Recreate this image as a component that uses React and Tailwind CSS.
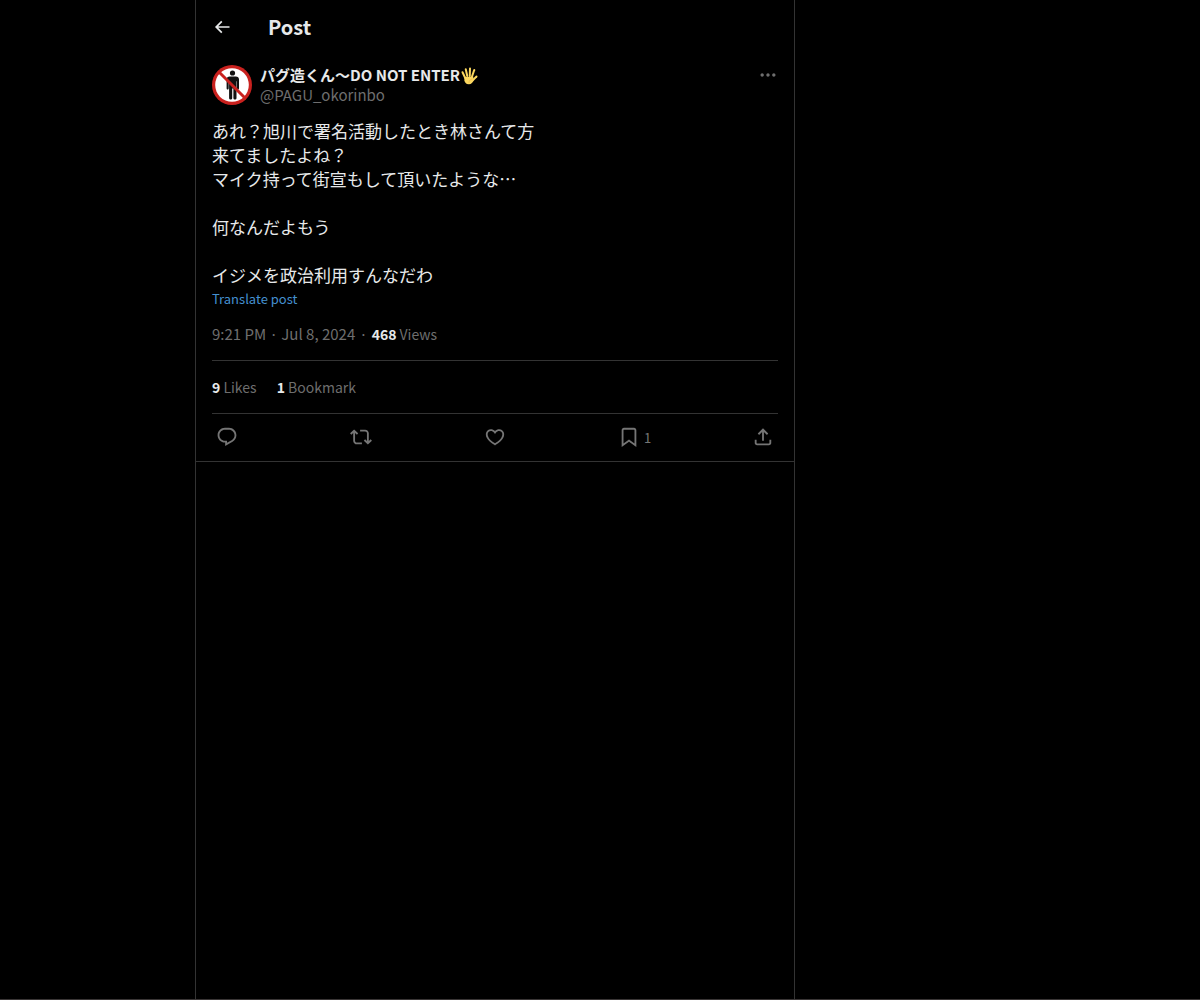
const PATHS = {
  back: "M7.414 13l5.043 5.04-1.414 1.42L3.586 12l7.457-7.46 1.414 1.42L7.414 11H21v2H7.414z",
  more: "M3 12c0-1.1.9-2 2-2s2 .9 2 2-.9 2-2 2-2-.9-2-2zm9 2c1.1 0 2-.9 2-2s-.9-2-2-2-2 .9-2 2 .9 2 2 2zm7 0c1.1 0 2-.9 2-2s-.9-2-2-2-2 .9-2 2 .9 2 2 2z",
  reply: "M1.751 10c0-4.42 3.584-8 8.005-8h4.366c4.49 0 8.129 3.64 8.129 8.13 0 2.96-1.607 5.68-4.196 7.11l-8.054 4.46v-3.69h-.067c-4.49.1-8.183-3.51-8.183-8.01zm8.005-6c-3.317 0-6.005 2.69-6.005 6 0 3.37 2.77 6.08 6.138 6.01l.351-.01h1.761v2.3l5.087-2.81c1.951-1.08 3.163-3.13 3.163-5.36 0-3.39-2.744-6.13-6.129-6.13H9.756z",
  repost: "M4.5 3.88l4.432 4.14-1.364 1.46L5.5 7.55V16c0 1.1.896 2 2 2H13v2H7.5c-2.209 0-4-1.79-4-4V7.55L1.432 9.48.068 8.02 4.5 3.88zM16.5 6H11V4h5.5c2.209 0 4 1.79 4 4v8.45l2.068-1.93 1.364 1.46-4.432 4.14-4.432-4.14 1.364-1.46 2.068 1.93V8c0-1.1-.896-2-2-2z",
  like: "M16.697 5.5c-1.222-.06-2.679.51-3.89 2.16l-.805 1.09-.806-1.09C9.984 6.01 8.526 5.44 7.304 5.5c-1.243.07-2.349.78-2.91 1.91-.552 1.12-.633 2.78.479 4.82 1.074 1.97 3.257 4.27 7.129 6.61 3.87-2.34 6.052-4.64 7.126-6.61 1.111-2.04 1.03-3.7.477-4.82-.561-1.13-1.666-1.84-2.908-1.91zm4.187 7.69c-1.351 2.48-4.001 5.12-8.379 7.67l-.503.3-.504-.3c-4.379-2.55-7.029-5.19-8.382-7.67-1.36-2.5-1.41-4.86-.514-6.67.887-1.79 2.647-2.91 4.601-3.01 1.651-.09 3.368.56 4.798 2.01 1.429-1.45 3.146-2.1 4.796-2.01 1.954.1 3.714 1.22 4.601 3.01.896 1.81.846 4.17-.514 6.67z",
  bookmark: "M4 4.5C4 3.12 5.119 2 6.5 2h11C18.881 2 20 3.12 20 4.5v18.44l-8-5.71-8 5.71V4.5zM6.5 4c-.276 0-.5.22-.5.5v14.56l6-4.29 6 4.29V4.5c0-.28-.224-.5-.5-.5h-11z",
  share: "M12 2.59l5.7 5.7-1.41 1.42L13 6.41V16h-2V6.41l-3.3 3.3-1.41-1.42L12 2.59zM21 15l-.02 3.51c0 1.38-1.12 2.49-2.5 2.49H5.5C4.11 21 3 19.88 3 18.5V15h2v3.5c0 .28.22.5.5.5h12.98c.28 0 .5-.22.5-.5L19 15h2z",
};

function Icon({ name, className }) {
  return (
    <svg viewBox="0 0 24 24" fill="currentColor" aria-hidden="true" className={className}>
      <path d={PATHS[name]} />
    </svg>
  );
}

function Avatar() {
  return (
    <svg viewBox="0 0 40 40" className="size-10 shrink-0" role="img" aria-label="パグ造くん">
      <circle cx="20" cy="20" r="20" fill="#c9211e" />
      <circle cx="20" cy="20" r="16.800" fill="#fff" />
      <g fill="#111">
        <circle cx="20.5" cy="8" r="2.600" />
        <path d="M17.800 11.500h6c2 0 3.200 1.200 3.200 3v8.800c0 1.600-2.100 1.600-2.100 0v-7h-.4v16.700c0 2-3.100 2-3.100 0v-9.500h-1.200v9.500c0 2-3.100 2-3.100 0V16.300h-.4v7c0 1.600-2.100 1.600-2.100 0v-8.800c0-1.800 1.200-3 3.200-3z" />
      </g>
      <path d="M7.500 7.500l25 25" stroke="#c9211e" strokeWidth="3" />
    </svg>
  );
}

function RaisedHand() {
  return (
    <svg viewBox="0 0 36 36" className="mt-0.5 size-[18px]" role="img" aria-label="🖐">
      <g fill="none" stroke="#fbd75f" strokeLinecap="round" strokeWidth="4">
        <path d="M10.500 22L5 10.500" />
        <path d="M14.500 18L11.500 4.500" />
        <path d="M19.500 18l.5-15" />
        <path d="M24 19l4.500-13" />
        <path d="M25 27l8-8" />
      </g>
      <path fill="#fbd75f" d="M8.800 20l17.500-1 1 7c-1.500 5-4.500 8.500-9.500 8.500-6 0-8.500-4-9-8z" />
      <path fill="none" stroke="#dfa23a" strokeLinecap="round" strokeWidth="1" d="M18 31c0-4 2.500-6.500 6.500-7" />
    </svg>
  );
}

const ACTIONS = [
  { name: "reply", label: "Reply" },
  { name: "repost", label: "Repost" },
  { name: "like", label: "Like" },
  { name: "bookmark", label: "Bookmark", count: 1 },
  { name: "share", label: "Share" },
];

export default function App() {
  return (
    <div className="grid min-h-screen grid-cols-[195px_minmax(0,600px)_minmax(0,1fr)] border-b border-[#3a3636] bg-black font-['Noto_Sans_CJK_JP',sans-serif] text-[15px] leading-5 text-[#e7e9ea]">
      <main className="col-start-2 border-x border-[#333333]">
        <header className="flex h-[53px] items-center px-4">
          <button type="button" aria-label="Back" className="w-14">
            <Icon name="back" className="size-5" />
          </button>
          <h1 className="text-xl leading-6 font-bold">Post</h1>
        </header>
        <article className="border-b border-[#333333] px-4 pt-3">
          <div className="flex gap-2">
            <Avatar />
            <div className="min-w-0 flex-1">
              <a href="#profile" className="flex h-5 items-center font-bold">
                <span>パグ造くん〜DO NOT ENTER</span>
                <RaisedHand />
              </a>
              <a href="#profile" className="block text-[#6e6e6e]">@PAGU_okorinbo</a>
            </div>
            <button type="button" aria-label="More" className="h-5 text-[#6e6e6e]">
              <Icon name="more" className="size-5" />
            </button>
          </div>
          <p className="mt-3.5 text-[17px] leading-6 whitespace-pre-line">
            {"あれ？旭川で署名活動したとき林さんて方\n来てましたよね？\nマイク持って街宣もして頂いたような…\n\n何なんだよもう\n\nイジメを政治利用すんなだわ"}
          </p>
          <button type="button" className="block text-[13px] leading-6 text-[#4490d0]">Translate post</button>
          <div className="mt-[13px] mb-4 flex gap-1 text-[#6e6e6e]">
            <a href="#time">9:21 PM · Jul 8, 2024</a>
            <span>·</span>
            <span className="text-sm leading-5"><b className="text-[#e7e9ea]">468</b> Views</span>
          </div>
          <div className="flex gap-5 border-y border-[#333333] py-4 text-sm leading-5 text-[#6e6e6e]">
            <a href="#likes"><b className="text-[#e7e9ea]">9</b> Likes</a>
            <a href="#bookmarks"><b className="text-[#e7e9ea]">1</b> Bookmark</a>
          </div>
          <div className="flex h-[47px] items-center justify-between px-1 pb-px text-[#757575]">
            {ACTIONS.map(({ name, label, count }) => (
              <button key={name} type="button" aria-label={label} className="flex w-[22px] items-end gap-1 text-[13px] leading-5">
                <Icon name={name} className="size-[22px] shrink-0" />
                {count && <span>{count}</span>}
              </button>
            ))}
          </div>
        </article>
      </main>
    </div>
  );
}
